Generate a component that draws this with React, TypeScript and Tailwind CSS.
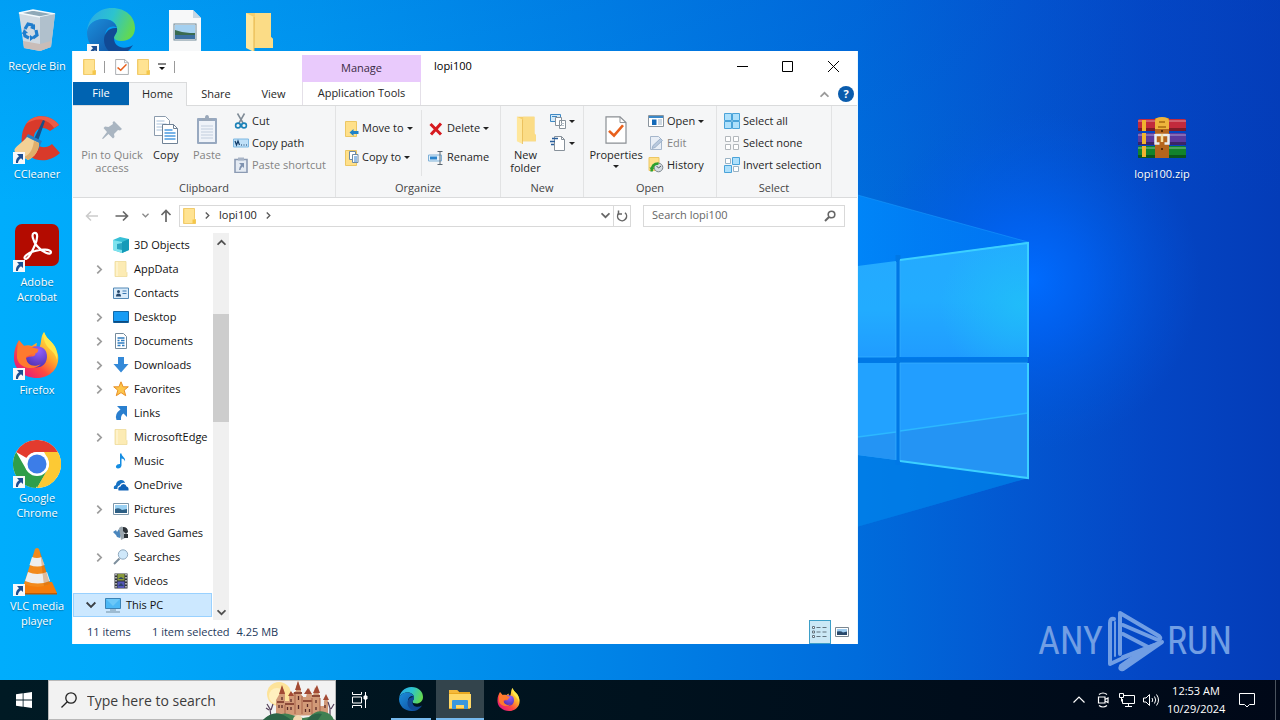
import type { ReactNode } from 'react';

interface IconProps {
  className?: string;
}

interface TreeItem {
  name: string;
  icon: ReactNode;
  expandable?: boolean;
}

/* ---------- desktop background ---------- */

function Wallpaper() {
  return (
    <svg className="absolute inset-0 h-full w-full" viewBox="0 0 1280 680" preserveAspectRatio="none" aria-hidden="true">
      <defs>
        <linearGradient id="sky" x1="0" y1="0" x2="1" y2="0">
          <stop offset="0" stopColor="#00adfc" />
          <stop offset="0.1" stopColor="#00a8fa" />
          <stop offset="0.25" stopColor="#009cf2" />
          <stop offset="0.45" stopColor="#0086e8" />
          <stop offset="0.67" stopColor="#006cdc" />
          <stop offset="0.8" stopColor="#0356d0" />
          <stop offset="0.9" stopColor="#0446c4" />
          <stop offset="1" stopColor="#043cb8" />
        </linearGradient>
        <linearGradient id="topShade" x1="0" y1="0" x2="0" y2="1">
          <stop offset="0" stopColor="#0048c8" stopOpacity="0.14" />
          <stop offset="0.3" stopColor="#0048c8" stopOpacity="0" />
        </linearGradient>
        <radialGradient id="glow" gradientUnits="userSpaceOnUse" cx="1030" cy="280" r="170">
          <stop offset="0" stopColor="#006cff" />
          <stop offset="0.35" stopColor="#0064f8" stopOpacity="0.7" />
          <stop offset="1" stopColor="#0058e0" stopOpacity="0" />
        </radialGradient>
        <linearGradient id="beam" x1="0" y1="0" x2="1" y2="0">
          <stop offset="0" stopColor="#0092fa" />
          <stop offset="0.5" stopColor="#008cff" stopOpacity="0.9" />
          <stop offset="1" stopColor="#007cf4" stopOpacity="0.7" />
        </linearGradient>
        <linearGradient id="pane" x1="0" y1="0" x2="0" y2="1">
          <stop offset="0" stopColor="#24aaff" />
          <stop offset="0.5" stopColor="#22acff" />
          <stop offset="1" stopColor="#209cff" />
        </linearGradient>
        <radialGradient id="paneLight" gradientUnits="userSpaceOnUse" cx="1020" cy="305" r="80">
          <stop offset="0" stopColor="#20c0f8" stopOpacity="0.8" />
          <stop offset="1" stopColor="#20c0f8" stopOpacity="0" />
        </radialGradient>
      </defs>
      <rect width="1280" height="680" fill="url(#sky)" />
      <rect width="1280" height="680" fill="url(#topShade)" />
      <rect x="840" y="90" width="380" height="400" fill="url(#glow)" />
      <path d="M600 124 L1028 242 V478 L600 600Z" fill="url(#beam)" />
      <path d="M600 124 L1028 242" stroke="#1ca0ff" strokeOpacity="0.5" />
      <path d="M850 358H1028V478L850 529Z" fill="#0078dc" opacity="0.6" />
      <path d="M898 255V465M850 360H1028" stroke="#0078e6" strokeWidth="5" />
      <path d="M850 267L896 261V357H850Z" fill="url(#pane)" />
      <path d="M900 260L1028 242V357H900Z" fill="url(#pane)" />
      <path d="M900 260L1028 242V357H900Z" fill="url(#paneLight)" />
      <path d="M850 363H896V460L850 454Z" fill="#22a2ff" />
      <path d="M900 363H1028V478L900 461Z" fill="#229eff" />
      <path d="M850 438L896 432V460L850 454ZM900 431L1028 413V478L900 461Z" fill="#2494f4" />
      <path d="M850 438L896 432M900 431L1028 413" stroke="#2cb8ff" strokeWidth="1.5" />
      <path d="M896 262V357H858M896 363V460M900 461V363H1027M900 357V260" stroke="#38b0ff" fill="none" strokeOpacity="0.7" />
      <path d="M900 260L1028 243V357M1028 363V478L900 461" stroke="#3cd0ff" strokeWidth="2" fill="none" />
    </svg>
  );
}

function Watermark() {
  return (
    <div className="absolute right-12 bottom-2 flex items-center font-['Roboto_Condensed','Liberation_Sans_Narrow','DejaVu_Sans_Condensed',sans-serif] text-[38px] leading-[62px] text-[#719ee4]">
      <span>ANY</span>
      <svg className="mx-0.5" width="60" height="62" viewBox="0 0 60 62" fill="none" stroke="#719ee4" strokeWidth="4" strokeLinejoin="round" strokeLinecap="round" aria-hidden="true">
        <path d="M9 9 Q5 8 5 13 V54 L18 48 L52 34 M15 44 V3 L54 26 Q57 29 53 30 L18 15" />
        <path d="M18 47 L57 32 L18 59 Q14 60 16 56 L43 37 L18 24" />
        <path d="M10 12 V46" strokeWidth="2" />
      </svg>
      <span>RUN</span>
    </div>
  );
}

/* ---------- application logos ---------- */

function EdgeLogo({ className }: IconProps) {
  return (
    <svg className={className} viewBox="0 0 48 48" aria-hidden="true">
      <defs>
        <linearGradient id="edgeTop" x1="0" y1="0.2" x2="1" y2="0.5">
          <stop offset="0" stopColor="#2aa9e8" />
          <stop offset="0.5" stopColor="#2cc3cf" />
          <stop offset="1" stopColor="#64d94e" />
        </linearGradient>
        <linearGradient id="edgeLow" x1="0" y1="0" x2="1" y2="1">
          <stop offset="0" stopColor="#1b8fdc" />
          <stop offset="1" stopColor="#0f4b9c" />
        </linearGradient>
      </defs>
      <path d="M0 24C1 10 11 0 25 0c14 0 23 9 23 20 0 8-6 13-13 13-6 0-8-2-8-4s3-3 3-8c0-6-6-10-13-10C8 11 1 16 0 24z" fill="url(#edgeTop)" />
      <path d="M0 24c1-8 8-13 16-13 8 0 13 4 14 9-3-3-12-2-12 9 0 10 9 19 19 17-3 1-7 2-12 2C11 48 0 38 0 24z" fill="url(#edgeLow)" />
      <path d="M30 20c-8-1-13 5-13 12 0 9 8 16 17 15 5-2 9-5 12-10-8 5-19 3-19-7 0-3 4-5 3-10z" fill="#114a95" />
    </svg>
  );
}

function FirefoxLogo({ className }: IconProps) {
  return (
    <svg className={className} viewBox="0 0 48 48" aria-hidden="true">
      <defs>
        <linearGradient id="foxBody" x1="0.85" y1="0.1" x2="0.15" y2="0.9">
          <stop offset="0" stopColor="#fff04a" />
          <stop offset="0.35" stopColor="#ffa82c" />
          <stop offset="0.65" stopColor="#ff4a3f" />
          <stop offset="1" stopColor="#e41a7c" />
        </linearGradient>
        <radialGradient id="foxGlobe" cx="0.6" cy="0.2" r="0.9">
          <stop offset="0" stopColor="#9460fc" />
          <stop offset="1" stopColor="#4a2dac" />
        </radialGradient>
      </defs>
      <path d="M6 8l5 6c3-1 5-1 8 0 1-1 4-3 5-3 0 0-2 5 2 5 3-4 1-11 5-16 2 6 6 8 9 12 3 3 4 8 5 11 2 13-8 23-21 23C11 46 0 37 1 24 1 18 3 13 6 8z" fill="url(#foxBody)" />
      <path d="M15 18c3-4 10-5 15-2 6 4 5 15-1 18-7 4-16-1-16-8 3-2 6-1 8-2 2-1 2-3-1-4z" fill="url(#foxGlobe)" />
      <path d="M6 9l5 5c4-1 9 2 14 3 1 3-2 5-6 5l-6 3c0 8 8 11 15 7-6 7-22 5-24-6 0-6 0-12 2-17z" fill="#ff7a2e" />
      <path d="M31 0c2 6 6 8 9 12 3 4 5 10 4 16-2-8-6-9-10-14-3-4-4-9-3-14z" fill="#ffe84a" />
    </svg>
  );
}

function ChromeLogo() {
  return (
    <svg className="h-12 w-12" viewBox="0 0 48 48" aria-hidden="true">
      <circle cx="24" cy="24" r="24" fill="#fff" />
      <path d="M3.2 12A24 24 0 0 1 44.8 12H24A12 12 0 0 0 13.6 18z" fill="#e33b2e" />
      <path d="M3.2 12L13.6 30A12 12 0 0 0 24 36L23 48A24 24 0 0 1 3.2 12z" fill="#2f9e4a" />
      <path d="M44.8 12A24 24 0 0 1 24 48L34.4 30A12 12 0 0 0 34.4 18L31 12z" fill="#fcc934" />
      <path d="M13.6 30L24 48L34.4 30z" fill="#2f9e4a" />
      <path d="M24 48L34.4 30A12 12 0 0 0 34.4 18L48 24 40 42z" fill="#fcc934" />
      <circle cx="24" cy="24" r="12" fill="#fff" />
      <circle cx="24" cy="24" r="9.5" fill="#3c7de8" />
    </svg>
  );
}

function RecycleBinIcon() {
  return (
    <svg className="h-12 w-12" viewBox="0 0 48 48" aria-hidden="true">
      <path d="M6 5L20 2l22 4-4 33-11 4-16-3z" fill="#d0dae2" />
      <path d="M6 5l21 4 15-3L20 2z" fill="#8fa9b8" stroke="#f4fafd" strokeWidth="1.5" />
      <path d="M27 9l15-3-4 33-11 4z" fill="#b0c0cc" />
      <path d="M10 33l17 3 11-3-1 6-10 4-16-3z" fill="#c9bdb8" />
      <g fill="none" stroke="#1f7dcd" strokeWidth="3.2">
        <path d="M12 21l3-5 4 1 2 3" />
        <path d="M23 22l1 5-4 3" />
        <path d="M16 30l-4-2-1-4" />
      </g>
      <path d="M22 16v6l-5-2zM17 33v-6l4 3zM9 26l2-5 4 4z" fill="#1f7dcd" />
    </svg>
  );
}

function CCleanerIcon() {
  return (
    <svg className="h-12 w-12" viewBox="0 0 48 48" aria-hidden="true">
      <path d="M46 9C38-2 20-3 13 8c-4 6-5 14-4 21 3 14 23 22 38 8l-8-9c-7 6-17 3-18-5-1-9 8-15 16-8z" fill="#d93a2a" />
      <path d="M46 9C38-2 20-3 13 8c9-6 20-7 28 4z" fill="#ee5c46" />
      <path d="M30 4l2 1-7 20-4-2z" fill="#1b4f86" />
      <path d="M15 18l14 7-4 9-15-8z" fill="#2a7fc4" />
      <path d="M14 21l12 6c0 7-4 14-11 17L2 36c-3-4 6-8 12-15z" fill="#f3d196" />
      <path d="M26 27c0 7-4 14-11 17l-4-3c7-3 9-9 10-16z" fill="#e0ae6a" />
    </svg>
  );
}

function AcrobatIcon() {
  return (
    <svg className="h-12 w-12" viewBox="0 0 48 48" aria-hidden="true">
      <rect x="2" y="0" width="44" height="42" rx="7" fill="#b30b00" />
      <path d="M21 9c5-1 3 7 1 12-3 7-6 13-9 14-4 0 0-6 9-8 7-2 15-2 16 1 0 4-9 0-14-6-4-5-6-12-3-13z" fill="none" stroke="#fff" strokeWidth="2.2" />
    </svg>
  );
}

function VlcIcon() {
  return (
    <svg className="h-12 w-12" viewBox="0 0 48 48" aria-hidden="true">
      <path d="M12 34l-5 11h37l-5-11z" fill="#f57c0b" />
      <path d="M7 45h37v1.500H7z" fill="#c25a00" />
      <path d="M22 1q2-2 4 0l11 35q-12 6-26 0z" fill="#f28a1c" />
      <path d="M19 9q5 2 9.500 0l3 8q-7 3-15 0zM15 24q9 4 19 0l3 9q-12 5-25 0z" fill="#eeeeee" />
      <path d="M27 3l4 35 6-2z" fill="#c45f08" opacity="0.35" />
    </svg>
  );
}

function ImageFileIcon() {
  return (
    <svg className="h-12 w-12" viewBox="0 0 48 48" aria-hidden="true">
      <path d="M8 2h24l8 8v38H8z" fill="#f7f8f9" />
      <path d="M32 2v8h8z" fill="#c7d6e2" />
      <rect x="13" y="16" width="22" height="16" fill="#fff" stroke="#6f8797" />
      <rect x="14" y="17" width="20" height="14" fill="#a4d0f0" />
      <path d="M14 22l7 2 8 1h5v2H14z" fill="#3a6b50" />
      <path d="M14 27h20v4H14z" fill="#3b6fa0" />
    </svg>
  );
}

function BigFolder({ className }: IconProps) {
  return (
    <svg className={className} viewBox="0 0 28 40" aria-hidden="true">
      <path d="M1 1h25v24l2 2v9H8z" fill="#f6cf6c" />
      <path d="M10 1h16v24l2 2v9H9z" fill="#fbdc86" />
      <path d="M1 1l8 4v35l-8-4z" fill="#ffe79c" />
      <path d="M9 5v35" stroke="#e5b64d" />
    </svg>
  );
}

function RarIcon() {
  return (
    <svg className="h-12 w-12" viewBox="0 0 48 48" aria-hidden="true">
      <rect x="0" y="3" width="48" height="12" rx="1.500" fill="#c22a3c" />
      <rect x="0" y="17" width="48" height="12" rx="1.500" fill="#5b3a9e" />
      <rect x="0" y="30" width="48" height="12" rx="1.500" fill="#12832c" />
      <path d="M0 4h48v2H0zM0 18h48v2H0zM0 31h48v2H0z" fill="#fff" opacity="0.25" />
      <path d="M0 12h48v3H0zM0 26h48v3H0zM0 39h48v3H0z" fill="#000" opacity="0.35" />
      <path d="M4 4h4v11H4zM4 17h4v11H4zM4 30h4v11H4z" fill="#f1b42e" />
      <path d="M17 2h14v40H17z" fill="#b5651d" />
      <path d="M17 5q0-4 7-4t7 4v8H17z" fill="#eeb43c" />
      <path d="M21 6h6M20 11h8" stroke="#a86a10" strokeWidth="1.500" />
      <path d="M24 14v2M24 32v2" stroke="#5a2c08" strokeWidth="2" />
      <path d="M17.500 18v9.500h4M30.500 18v9.500h-4M17.500 19h13" fill="none" stroke="#e9edf0" strokeWidth="2.500" />
      <path d="M24 18v8" stroke="#f8e0a0" strokeWidth="2.500" />
    </svg>
  );
}

function ShortcutBadge() {
  return (
    <svg className="absolute bottom-0 left-0 h-3 w-3" viewBox="0 0 12 12" aria-hidden="true">
      <path d="M0 0h12v12H0z" fill="#f6f8fa" />
      <path d="M4 2h6v6L8 6.200C6 7.500 5 9 5 11H3C2.500 8 4 5.500 6 4.200z" fill="#1d4f91" />
    </svg>
  );
}

function DesktopIcon({ name, icon, shortcut }: { name?: string; icon: ReactNode; shortcut?: boolean }) {
  return (
    <a href="#" className="flex h-[108px] w-[74px] flex-col items-center gap-0.5 pt-2 text-center text-[11px] leading-[15px] text-white [text-shadow:0_1px_1px_#0005]">
      <span className="relative flex h-12 w-12 justify-center">
        {icon}
        {shortcut && <ShortcutBadge />}
      </span>
      {name}
    </a>
  );
}

/* ---------- small glyphs ---------- */

function Folder({ className = 'h-4 w-4' }: IconProps) {
  return (
    <svg className={className} viewBox="0 0 16 16" aria-hidden="true">
      <path d="M1.500 0.500h11v10l1 1v4h-12z" fill="#fbd667" stroke="#eec35a" strokeWidth="0.800" />
      <path d="M2.500 1h9.500v14H2.500z" fill="#ffe392" />
      <path d="M10.500 11.500h3v4h-3z" fill="#f5c749" />
    </svg>
  );
}

function PaleFolder() {
  return (
    <svg className="h-4 w-4" viewBox="0 0 16 16" aria-hidden="true">
      <path d="M2 0.500h11v10l1 1v4H2z" fill="#fcebb4" stroke="#eeda9b" strokeWidth="0.800" />
      <path d="M4 1v14" stroke="#fff5d2" strokeWidth="1.500" />
    </svg>
  );
}

function CheckPage({ className = 'h-4 w-4' }: IconProps) {
  return (
    <svg className={className} viewBox="0 0 22 30" preserveAspectRatio="none" aria-hidden="true">
      <path d="M1 1h14l6 6v22H1z" fill="#fff" stroke="#8a8f94" strokeWidth="1.200" />
      <path d="M15 1v6h6" fill="none" stroke="#8a8f94" />
      <path d="M4 16l5 5 9-11" fill="none" stroke="#e8601c" strokeWidth="2.600" />
    </svg>
  );
}

function Caret() {
  return (
    <svg className="h-[3px] w-[6px] shrink-0" viewBox="0 0 6 3" aria-hidden="true">
      <path d="M0 0h6L3 3z" fill="#222" />
    </svg>
  );
}

function Chevron({ className }: IconProps) {
  return (
    <svg className={className} viewBox="0 0 8 8" fill="none" stroke="currentColor" strokeWidth="1.500" aria-hidden="true">
      <path d="M2 0.500L5.500 4L2 7.500" />
    </svg>
  );
}

function Svg16({ children }: { children: ReactNode }) {
  return (
    <svg className="h-4 w-4 shrink-0" viewBox="0 0 16 16" fill="none" aria-hidden="true">
      {children}
    </svg>
  );
}

const cutIcon = (
  <Svg16>
    <path d="M4.500 0.500L10 10M11.500 0.500L6 10" stroke="#7f8b96" strokeWidth="1.500" />
    <circle cx="5" cy="12.500" r="2.400" stroke="#1c82b8" strokeWidth="1.600" />
    <circle cx="11" cy="12.500" r="2.400" stroke="#1c82b8" strokeWidth="1.600" />
  </Svg16>
);

const copyPathIcon = (
  <Svg16>
    <path d="M0.500 4h15v8h-15z" fill="#bfe0f8" stroke="#7db8e2" />
    <path d="M2 6l1.500 4L5 6l1.500 4M8 10h1M10.500 10h1M13 10h1" stroke="#123a66" strokeWidth="1.200" />
  </Svg16>
);

const pasteShortcutIcon = (
  <Svg16>
    <path d="M2 2.500h12v13H2z" fill="#e5ebf3" stroke="#8c9bb3" strokeWidth="1.600" />
    <path d="M5 0.500h6v3H5z" fill="#a8b4c6" />
    <path d="M6 6h5v5L9.500 9.500Q7.500 11 7.500 13H6q0-3 2-5z" fill="#8093b0" />
  </Svg16>
);

const moveToIcon = (
  <Svg16>
    <path d="M2.500 0.500h11v15h-11z" fill="#ffe08a" stroke="#ecc764" />
    <path d="M6.500 11.500l4-3.500v2h5v3h-5v2z" fill="#1f82c8" />
  </Svg16>
);

const copyToIcon = (
  <Svg16>
    <path d="M2.500 0.500h11v15h-11z" fill="#ffe08a" stroke="#ecc764" />
    <path d="M6.500 1.500h6v8h-6z" fill="#fff" stroke="#6d8aa6" />
    <path d="M9.500 4.500h5.500v8H9.500z" fill="#fff" stroke="#6d8aa6" />
    <path d="M11 7h3M11 9h3M11 11h3" stroke="#2f7fd0" />
  </Svg16>
);

const deleteIcon = (
  <Svg16>
    <path d="M2.500 3l10.500 10.500M13 2.500L3 13.500" stroke="#d61a1f" strokeWidth="3" />
  </Svg16>
);

const renameIcon = (
  <Svg16>
    <path d="M0.500 5h13v6H0.500z" fill="#e4f1fb" stroke="#7fb1d8" />
    <path d="M2 6.500h7v3H2z" fill="#2b84cc" />
    <path d="M9.500 1.500h5M12 1.500v13M9.500 14.500h5" stroke="#5b6670" />
  </Svg16>
);

const openIcon = (
  <Svg16>
    <path d="M0.500 2.500h15v11h-15z" fill="#fff" stroke="#8a949d" />
    <path d="M1 3h14v2H1z" fill="#3a88c8" />
    <path d="M4 6.500h4.500v5.500H4z" fill="#1369b8" />
    <path d="M10 7h4M10 9h4M10 11h4" stroke="#9db2c4" />
  </Svg16>
);

const editIcon = (
  <Svg16>
    <path d="M2.500 1.500h8l3 3v10h-11z" fill="#e8eef6" stroke="#a5b6cb" />
    <path d="M4 13.500l1-3 7.500-7 2 2-7.500 7z" fill="#b8c9de" stroke="#93a8c2" strokeWidth="0.800" />
  </Svg16>
);

const historyIcon = (
  <Svg16>
    <path d="M1 0.500h10v13H1z" fill="#ffe08a" stroke="#ecc764" />
    <circle cx="10.500" cy="10.500" r="4.300" fill="#d6dde2" stroke="#7c868e" />
    <path d="M8.500 9l2 2 2.500-2" stroke="#4b565f" />
    <path d="M3.500 14.500C3.500 9 6 6.500 10.500 6.500" stroke="#2ba02f" strokeWidth="2.400" />
    <path d="M1.500 10.500h5l-2.500 4z" fill="#2ba02f" />
  </Svg16>
);

const selectAllIcon = (
  <Svg16>
    <path d="M0.500 0.500h7v7h-7zM8.500 0.500h7v7h-7zM0.500 8.500h7v7h-7zM8.500 8.500h7v7h-7z" fill="#aee0fb" stroke="#4aa3d9" />
  </Svg16>
);

const selectNoneIcon = (
  <Svg16>
    <path d="M1.500 1.500h5v5h-5zM9.500 1.500h5v5h-5zM1.500 9.500h5v5h-5zM9.500 9.500h5v5h-5z" fill="#fff" stroke="#b3b8bc" />
  </Svg16>
);

const invertIcon = (
  <Svg16>
    <path d="M1.500 1.500h5v5h-5zM9.500 9.500h5v5h-5z" fill="#fff" stroke="#9ab3c4" />
    <path d="M8.500 0.500h7v7h-7zM0.500 8.500h7v7h-7z" fill="#aee0fb" stroke="#4aa3d9" />
  </Svg16>
);

const newItemIcon = (
  <Svg16>
    <path d="M0.500 1.500h10v7h-10z" fill="#d4eaf9" stroke="#3f89c4" />
    <path d="M2 3.500h5" stroke="#3f89c4" />
    <path d="M5.500 4.500h6v8h-6zM9.500 7.500h6v8h-6z" fill="#fff" stroke="#87919a" />
    <path d="M11 10.500h3M11 12.500h3" stroke="#b5bfc8" />
  </Svg16>
);

const easyAccessIcon = (
  <Svg16>
    <path d="M4.500 1.500h7l3 3v11h-10z" fill="#fff" stroke="#87919a" />
    <path d="M11.500 1.500v3h3" stroke="#87919a" />
    <path d="M2 3.500h6M0 6.500h5M1 9.500h3" stroke="#2a5f9c" strokeWidth="1.300" />
  </Svg16>
);

const pinIcon = (
  <svg className="h-6 w-6" viewBox="0 0 24 24" aria-hidden="true">
    <path d="M14 3l8 8-2 1.500-2-0.500-4 4 0.500 3-1.500 1.500-4.500-4.500L3 21l-1-0.500L7 14 3.500 10l1.500-1.500 3.500 0.500L13 6l-0.500-1.500z" fill="#a9b5c1" />
  </svg>
);

const copyIcon = (
  <svg className="h-[30px] w-[26px]" viewBox="0 0 26 30" fill="none" aria-hidden="true">
    <path d="M1.500 1.500h11l4 4v15h-15z" fill="#fff" stroke="#8b9bad" />
    <path d="M3.500 6h8M3.500 9h10M3.500 12h10M3.500 15h10" stroke="#a9c2dc" />
    <path d="M9.500 9.500h11l4 4v15h-15z" fill="#fff" stroke="#6f8296" />
    <path d="M20.500 9.500v4h4" stroke="#6f8296" />
    <path d="M11.500 15h8M11.500 18h11M11.500 21h11M11.500 24h11" stroke="#4b9ae0" strokeWidth="1.300" />
  </svg>
);

const pasteIcon = (
  <svg className="h-[32px] w-[22px]" viewBox="0 0 22 32" fill="none" aria-hidden="true">
    <rect x="1" y="4" width="20" height="26" rx="1" fill="#98a9c0" />
    <path d="M3 7h16v21H3z" fill="#eff3f9" />
    <path d="M5 12h12M5 15h12M5 18h12M5 21h12M5 24h12" stroke="#c1cddd" />
    <path d="M6 7V4h3q0-3 2-3t2 3h3v3z" fill="#9aa8ba" />
  </svg>
);

/* ---------- navigation tree ---------- */

const treeItems: TreeItem[] = [
  {
    name: '3D Objects',
    icon: (
      <Svg16>
        <path d="M0 3l7-3 9 2v11l-7 3-9-3z" fill="#37bfd6" />
        <path d="M0 3l9 2v11l-9-3z" fill="#7ee3ee" />
        <path d="M9 5l7-3v11l-7 3z" fill="#149ab8" />
        <path d="M4 7l5-1v7l-5-1z" fill="#2aa6c2" />
      </Svg16>
    ),
  },
  { name: 'AppData', icon: <PaleFolder />, expandable: true },
  {
    name: 'Contacts',
    icon: (
      <Svg16>
        <path d="M0.500 3h15v10.500h-15z" fill="#d9ebfa" stroke="#5288b5" />
        <circle cx="5.500" cy="6.500" r="1.500" fill="#24476b" />
        <path d="M3 11.500q0-3 2.500-3t2.500 3z" fill="#24476b" />
        <path d="M9.500 6h4M9.500 8.500h4" stroke="#3a78b2" />
      </Svg16>
    ),
  },
  {
    name: 'Desktop',
    icon: (
      <Svg16>
        <path d="M0.500 2.500h15v11h-15z" fill="#189cf4" stroke="#1369a8" />
        <path d="M1 12h14v1.500H1z" fill="#0d4a80" />
      </Svg16>
    ),
    expandable: true,
  },
  {
    name: 'Documents',
    icon: (
      <Svg16>
        <path d="M2.500 0.500h8l3 3v12h-11z" fill="#fff" stroke="#748a9b" />
        <path d="M4.500 5h7M4.500 7.500h2M8 7.500h3.500M4.500 10h7M4.500 12.500h3M9 12.500h2.500" stroke="#2f7cc0" strokeWidth="1.300" />
      </Svg16>
    ),
    expandable: true,
  },
  {
    name: 'Downloads',
    icon: (
      <Svg16>
        <path d="M5 0h6v7h4.500L8 15.500 0.500 7H5z" fill="#3489d8" />
      </Svg16>
    ),
    expandable: true,
  },
  {
    name: 'Favorites',
    icon: (
      <Svg16>
        <path d="M8 0.800l2.100 5h5.200l-4.100 3.400 1.500 5.500L8 11.600l-4.700 3.100 1.500-5.500L0.700 5.800h5.200z" fill="#fdc64a" stroke="#e88f28" />
      </Svg16>
    ),
    expandable: true,
  },
  {
    name: 'Links',
    icon: (
      <Svg16>
        <path d="M4 1h10v11l-3.500-3.500Q7.500 10 8 15H3.500Q1 9 7.500 4.500z" fill="#2a7fcf" />
      </Svg16>
    ),
  },
  { name: 'MicrosoftEdge', icon: <PaleFolder />, expandable: true },
  {
    name: 'Music',
    icon: (
      <Svg16>
        <path d="M7 0.500h1.500c0 3 4.500 4 3.500 8-0.500-2-2-3-3.500-3v7q-0.500 3-3.500 3Q2.500 15 3 13q1-2.200 4-2z" fill="#158de2" />
      </Svg16>
    ),
  },
  {
    name: 'OneDrive',
    icon: (
      <Svg16>
        <path d="M1 12Q0 9 3 8q0-4 4.500-5Q11 2.500 12 6Q8 5 6.500 8.500 4 9 4.500 12z" fill="#1672c4" />
        <path d="M5.500 13.500Q4.500 10 7.500 9.500 8 7 10.500 7t3 2.500Q16 10 15.500 13.500z" fill="#0f62b8" />
      </Svg16>
    ),
  },
  {
    name: 'Pictures',
    icon: (
      <Svg16>
        <path d="M0.500 2.500h15v11h-15z" fill="#fff" stroke="#7d97aa" />
        <path d="M2 4h12v8H2z" fill="#9ad0f2" />
        <path d="M2 8q4-2 7 1l5-1v4H2z" fill="#2d5f84" />
      </Svg16>
    ),
    expandable: true,
  },
  {
    name: 'Saved Games',
    icon: (
      <Svg16>
        <path d="M0 7l3-2 1 2 2-3 3 4-2 5-3-1-1-2z" fill="#4a86bd" />
        <path d="M6 3q3-3 5 0l1 10-4 2z" fill="#9aa5ad" />
        <path d="M10 2q5 0 5 5l-2 2-3-3zM11 9h4v4h-4z" fill="#2c3237" />
      </Svg16>
    ),
  },
  {
    name: 'Searches',
    icon: (
      <Svg16>
        <circle cx="10" cy="5.500" r="4.700" fill="#cfe8fa" stroke="#91aabf" />
        <path d="M6.500 9.500L1 15" stroke="#7d8e9c" strokeWidth="2" />
      </Svg16>
    ),
    expandable: true,
  },
  {
    name: 'Videos',
    icon: (
      <Svg16>
        <path d="M1.500 0.500h13v15h-13z" fill="#2e3238" />
        <path d="M4.500 1h7v6.500h-7z" fill="#8a9a3c" />
        <path d="M4.500 8.500h7V15h-7z" fill="#5457b8" />
        <path d="M5 6l3-2 3 2zM5 13l3-3 3 3z" fill="#2b4368" />
        <path d="M3 1v15M13 1v15" stroke="#fff" strokeWidth="1.200" strokeDasharray="1.500 1.500" />
      </Svg16>
    ),
  },
];

function NavigationPane() {
  return (
    <nav aria-label="Folders" className="w-[140px] overflow-hidden">
      <ul>
        {treeItems.map((item) => (
          <li key={item.name} className="flex h-6 items-center pl-[18px]">
            <span className="mr-1.5 flex w-4 justify-center text-[#9c9c9c]">
              {item.expandable && <Chevron className="h-[9px] w-[9px]" />}
            </span>
            {item.icon}
            <a href="#" className="ml-[5px] whitespace-nowrap">{item.name}</a>
          </li>
        ))}
        <li className="mr-px flex h-6 items-center border border-[#99d1ff] bg-[#cce8ff] pl-[9px]">
          <span className="mr-1.5 flex w-4 justify-center text-[#3b4045]">
            <Chevron className="h-[10px] w-[10px] rotate-90" />
          </span>
          <Svg16>
            <path d="M0.500 1.500h15v10h-15z" fill="#4db8f5" stroke="#3a82b5" />
            <path d="M1 2h14L8 9z" fill="#8ad6fb" opacity="0.500" />
            <path d="M5 13h6M1 15h14" stroke="#6f8fa5" />
          </Svg16>
          <a href="#" className="ml-[5px]">This PC</a>
        </li>
      </ul>
    </nav>
  );
}

/* ---------- ribbon ---------- */

function RibbonGroup({ title, children }: { title: string; children: ReactNode }) {
  return (
    <div className="flex flex-col border-r border-[#e2e3e4] pt-1">
      <div className="flex h-[66px]">{children}</div>
      <div className="pt-[3px] text-center leading-[18px] text-[#444]">{title}</div>
    </div>
  );
}

function LargeButton({ label, icon, className, caret }: { label: string; icon: ReactNode; className: string; caret?: boolean }) {
  return (
    <button type="button" className={`flex flex-col items-center pt-1 leading-[13px] ${className}`}>
      <span className="mb-0.5 flex h-8 items-center justify-center">{icon}</span>
      {label}
      {caret && <span className="mt-1"><Caret /></span>}
    </button>
  );
}

function SmallButton({ label, icon, caret, disabled }: { label?: string; icon: ReactNode; caret?: boolean; disabled?: boolean }) {
  return (
    <button type="button" disabled={disabled} className="flex flex-1 items-center gap-[3px] whitespace-nowrap disabled:text-[#838383]">
      {icon}
      {label}
      {caret && <Caret />}
    </button>
  );
}

function Ribbon() {
  return (
    <div className="flex border-y border-[#dadbdc] bg-[#f5f6f7] text-[#262626]">
      <RibbonGroup title="Clipboard">
        <LargeButton label="Pin to Quick access" icon={pinIcon} className="w-[78px] px-1 text-[#838383]" />
        <LargeButton label="Copy" icon={copyIcon} className="w-[30px]" />
        <LargeButton label="Paste" icon={pasteIcon} className="w-[52px] text-[#838383]" />
        <div className="flex w-[102px] flex-col">
          <SmallButton label="Cut" icon={cutIcon} />
          <SmallButton label="Copy path" icon={copyPathIcon} />
          <SmallButton label="Paste shortcut" icon={pasteShortcutIcon} disabled />
        </div>
      </RibbonGroup>
      <RibbonGroup title="Organize">
        <div className="flex w-[86px] flex-col border-r border-[#e2e3e4] pt-1 pb-1 pl-[7px]">
          <SmallButton label="Move to" icon={moveToIcon} caret />
          <SmallButton label="Copy to" icon={copyToIcon} caret />
        </div>
        <div className="flex w-[78px] flex-col pt-1 pb-1 pl-1.5">
          <SmallButton label="Delete" icon={deleteIcon} caret />
          <SmallButton label="Rename" icon={renameIcon} />
        </div>
      </RibbonGroup>
      <RibbonGroup title="New">
        <LargeButton label="New folder" icon={<BigFolder className="h-7 w-5" />} className="w-[49px] px-1.5" />
        <div className="flex w-[33px] flex-col">
          <SmallButton icon={newItemIcon} caret />
          <SmallButton icon={easyAccessIcon} caret />
          <span className="flex-1" />
        </div>
      </RibbonGroup>
      <RibbonGroup title="Open">
        <LargeButton label="Properties" icon={<CheckPage className="h-7 w-[22px]" />} className="w-16" caret />
        <div className="flex w-[68px] flex-col">
          <SmallButton label="Open" icon={openIcon} caret />
          <SmallButton label="Edit" icon={editIcon} disabled />
          <SmallButton label="History" icon={historyIcon} />
        </div>
      </RibbonGroup>
      <RibbonGroup title="Select">
        <div className="flex w-[114px] flex-col pl-[7px]">
          <SmallButton label="Select all" icon={selectAllIcon} />
          <SmallButton label="Select none" icon={selectNoneIcon} />
          <SmallButton label="Invert selection" icon={invertIcon} />
        </div>
      </RibbonGroup>
    </div>
  );
}

/* ---------- explorer window ---------- */

function TitleBar() {
  return (
    <header className="flex h-[31px] items-stretch">
      <div className="flex w-[229px] items-center pl-[9px]">
        <Folder />
        <span className="mr-2.5 ml-1.5 h-3 w-px bg-[#9a9a9a]" />
        <CheckPage className="h-4 w-[14px]" />
        <span className="w-[7px]" />
        <Folder />
        <svg className="ml-1.5 h-2 w-2" viewBox="0 0 8 8" aria-hidden="true">
          <path d="M0 1h8" stroke="#111" />
          <path d="M1 4h6L4 7z" fill="#111" />
        </svg>
        <span className="ml-2 h-3 w-px bg-[#9a9a9a]" />
      </div>
      <div className="mt-1 flex w-[119px] items-center justify-center bg-[#e9cafc] text-[#3a2a44]">Manage</div>
      <h1 className="flex flex-1 items-center pl-[13px] text-black">lopi100</h1>
      <button type="button" aria-label="Minimize" className="flex w-[45px] items-center justify-center">
        <svg className="h-[11px] w-[11px]" viewBox="0 0 11 11" aria-hidden="true"><path d="M0 5.500h11" stroke="#000" /></svg>
      </button>
      <button type="button" aria-label="Maximize" className="flex w-[45px] items-center justify-center">
        <svg className="h-[11px] w-[11px]" viewBox="0 0 11 11" aria-hidden="true"><path d="M0.500 0.500h10v10h-10z" stroke="#000" fill="none" /></svg>
      </button>
      <button type="button" aria-label="Close" className="flex w-[47px] items-center justify-center">
        <svg className="h-[11px] w-[11px]" viewBox="0 0 11 11" aria-hidden="true"><path d="M0 0l11 11M11 0L0 11" stroke="#000" /></svg>
      </button>
    </header>
  );
}

function TabRow() {
  return (
    <div className="relative z-10 -mb-px flex h-6 text-[#262626]">
      <button type="button" className="w-14 border-b border-[#dadbdc] bg-[#0063b1] text-white">File</button>
      <button type="button" className="w-[58px] border-t border-r border-[#dadbdc] bg-[#f5f6f7]">Home</button>
      <button type="button" className="w-[58px]">Share</button>
      <button type="button" className="w-[57px]">View</button>
      <button type="button" className="mb-px w-[119px] border-x border-[#e4e0e8] whitespace-nowrap">Application Tools</button>
      <span className="flex-1" />
      <button type="button" aria-label="Collapse ribbon" className="flex w-5 items-center justify-center text-[#9a9a9a]">
        <Chevron className="h-[9px] w-[9px] -rotate-90" />
      </button>
      <button type="button" aria-label="Help" className="my-1 mr-[3px] ml-1 h-4 w-4 rounded-full bg-[#0a5cad] text-[11px] leading-4 font-bold text-white">?</button>
    </div>
  );
}

function AddressRow() {
  return (
    <div className="flex h-[35px] items-center pr-3 pl-[11px] text-[#1f1f1f]">
      <button type="button" aria-label="Back" className="mr-3.5">
        <svg className="h-4 w-4" viewBox="0 0 16 16" fill="none" stroke="#cbcbcb" strokeWidth="1.500"><path d="M14 8H2.500M7 3.500L2.500 8L7 12.500" /></svg>
      </button>
      <button type="button" aria-label="Forward" className="mr-2">
        <svg className="h-4 w-4" viewBox="0 0 16 16" fill="none" stroke="#666" strokeWidth="1.700"><path d="M1.500 8H13.500M9 3.500L13.500 8L9 12.500" /></svg>
      </button>
      <button type="button" aria-label="Recent locations" className="mr-1.5 flex w-3.5 justify-center text-[#8a8a8a]">
        <Chevron className="h-[7px] w-[7px] rotate-90" />
      </button>
      <button type="button" aria-label="Up" className="mr-[5px]">
        <svg className="h-4 w-4" viewBox="0 0 16 16" fill="none" stroke="#666" strokeWidth="1.700"><path d="M8 14V2.500M3.500 7L8 2.500L12.500 7" /></svg>
      </button>
      <div className="flex h-[22px] min-w-0 flex-1 items-center border border-[#d9d9d9] pl-0.5">
        <Folder />
        <Chevron className="mx-1.5 h-[7px] w-[7px] text-[#5a5a5a]" />
        <a href="#" className="ml-0.5">lopi100</a>
        <Chevron className="ml-2 h-[7px] w-[7px] text-[#5a5a5a]" />
        <span className="flex-1" />
        <button type="button" aria-label="Previous locations" className="flex w-4 justify-center text-[#666]">
          <Chevron className="h-[9px] w-[9px] rotate-90" />
        </button>
        <button type="button" aria-label="Refresh" className="flex h-5 w-[17px] items-center justify-center border-l border-[#d9d9d9]">
          <svg className="h-3 w-3" viewBox="0 0 12 12" fill="none" stroke="#666" strokeWidth="1.500">
            <path d="M2.500 3.500A4.500 4.500 0 1 0 9 2.800" />
            <path d="M2.500 0.500v3.500h3.500" />
          </svg>
        </button>
      </div>
      <label className="ml-3 flex h-[22px] w-[202px] items-center border border-[#d9d9d9] pr-2 pl-2">
        <input type="search" aria-label="Search lopi100" placeholder="Search lopi100" className="min-w-0 flex-1 outline-none placeholder:text-[#666]" />
        <svg className="h-3 w-3" viewBox="0 0 12 12" fill="none" stroke="#666">
          <circle cx="7.500" cy="4.500" r="3.300" strokeWidth="1.600" />
          <path d="M5 7L1 11" strokeWidth="2" />
        </svg>
      </label>
    </div>
  );
}

function ScrollBar() {
  return (
    <div className="flex w-4 flex-col bg-[#f0f0f0] text-[#505050]">
      <button type="button" aria-label="Scroll up" className="flex h-[18px] items-center justify-center">
        <Chevron className="h-[9px] w-[9px] -rotate-90" />
      </button>
      <span className="flex-[63]" />
      <span className="flex-[108] bg-[#cdcdcd]" />
      <span className="flex-[181]" />
      <button type="button" aria-label="Scroll down" className="flex h-4 items-center justify-center">
        <Chevron className="h-[9px] w-[9px] rotate-90" />
      </button>
    </div>
  );
}

function StatusBar() {
  return (
    <footer className="flex h-6 items-center pr-[7px] pl-3.5 text-[#1e395b]">
      <span className="w-[65px]">11 items</span>
      <span>1 item selected</span>
      <span className="ml-[7px]">4.25 MB</span>
      <span className="flex-1" />
      <button type="button" aria-label="Details view" className="flex h-6 w-[22px] items-center justify-center border border-[#3d9fc8] bg-[#cbe8f6]">
        <Svg16>
          <path d="M0.500 2.500h2v2h-2zM0.500 7h2v2h-2zM0.500 11.500h2v2h-2z" fill="#fff" stroke="#62737f" />
          <path d="M4.500 3.500h4M10.500 3.500h4M4.500 8h4M10.500 8h4M4.500 12.500h4M10.500 12.500h4" stroke="#62737f" />
        </Svg16>
      </button>
      <button type="button" aria-label="Large icons view" className="ml-[3px]">
        <Svg16>
          <path d="M1.500 3.500h13v9h-13z" fill="#fff" stroke="#7b8791" />
          <path d="M3 5h10v6H3z" fill="#9fcdf0" />
          <path d="M3 7.500q4-1 6 1l4-1V11H3z" fill="#29496b" />
        </Svg16>
      </button>
    </footer>
  );
}

function ExplorerWindow() {
  return (
    <section aria-label="lopi100" className="absolute top-[51px] right-[422px] bottom-9 left-[72px] flex min-w-[760px] flex-col border-x border-[#e8f8ff] bg-white text-[11px]">
      <TitleBar />
      <TabRow />
      <Ribbon />
      <AddressRow />
      <div className="flex min-h-0 flex-1 text-[#111]">
        <NavigationPane />
        <ScrollBar />
        <main className="flex-1" />
      </div>
      <StatusBar />
    </section>
  );
}

/* ---------- taskbar ---------- */

function CastleArt() {
  return (
    <svg className="h-10 w-[72px]" viewBox="0 0 72 40" aria-hidden="true">
      <circle cx="16" cy="14" r="12" fill="#fde39a" />
      <circle cx="14" cy="16" r="8" fill="#fff0bf" />
      <path d="M13 36V20l4-7 2-7 3 7v8h4v-7l4-1 3-2V8l2-7 3 9v4l2 3h3l1-4 2-5 2 5 2 3 2-9 3 5 2 4v10h4v-5l2-4 2 4v14z" fill="#d29a78" />
      <path d="M16 14l3-9 3 9zM25 16l3-5 3 5zM32 10l3-9 3 9zM41 14l4-6 4 6zM50 13l4-8 3 8zM60 20l3-6 3 6z" fill="#a34a34" />
      <path d="M14 21h7v2h-7zM31 12h8v2h-8zM49 15h8v2h-8zM22 23h9v2h-9zM40 20h9v2h-9z" fill="#8d4a38" />
      <path d="M22 25v9M32 14v20M39 16v18M49 18v16M57 18v16" stroke="#a86248" />
      <path d="M16 25v3M19 25v3M19 17v3M28 19v3M35.500 16v4M44.500 24v3M53 20v3M53 27v3M62 25v3M35.500 25v4M28 27v3M24.500 27v3M46.500 29v3M42.500 29v3" stroke="#5a2a26" strokeWidth="1.300" />
      <path d="M4 24l3 5 1 8M10 24l-2 6M65 22l2 6v8M71 24l-3 5M3 28l3 2" stroke="#54405a" strokeWidth="1.200" fill="none" />
      <path d="M0 40q8-8 15-5 7-3 14 0l11 3 6-1q8-8 16-5 7 2 9 8z" fill="#3f8052" />
      <path d="M0 40q9-9 18-6 7 3 10 6zM44 40q6-8 15-6l-4 6z" fill="#2c6447" />
      <path d="M30 40q0-4 5-5 5 1 4 5z" fill="#f0d8b0" />
    </svg>
  );
}

function Taskbar() {
  return (
    <footer className="flex h-10 shrink-0 bg-linear-to-r from-[#001a24] via-[#00121e] to-[#000818] text-white">
      <button type="button" aria-label="Start" className="flex w-12 items-center justify-center">
        <svg className="h-4 w-4" viewBox="0 0 16 16" fill="#fff" aria-hidden="true">
          <path d="M0 2.200L6.700 1.300V7.600H0zM7.500 1.200L16 0V7.600H7.500zM0 8.400H6.700V14.700L0 13.800zM7.500 8.400H16V16L7.500 14.800z" />
        </svg>
      </button>
      <label className="flex w-72 items-center border border-[#b8b8b8] bg-[#f2f2f2] pl-3">
        <svg className="h-4 w-4 shrink-0" viewBox="0 0 16 16" fill="none" stroke="#222" strokeWidth="1.300" aria-hidden="true">
          <circle cx="10" cy="6" r="5.200" />
          <path d="M6.300 9.700L0.500 15.500" />
        </svg>
        <input type="text" aria-label="Type here to search" placeholder="Type here to search" className="ml-2.5 w-[176px] text-[14px] text-black outline-none placeholder:text-[#3c3c3c]" />
        <CastleArt />
      </label>
      <button type="button" aria-label="Task View" className="mr-[3px] flex w-12 items-center justify-center">
        <svg className="h-4 w-4" viewBox="0 0 16 16" fill="none" stroke="#fff" aria-hidden="true">
          <path d="M0.500 0v2.500h9V0M0.500 16v-2.500h9V16M0.500 5h9v6h-9zM13.500 0v16" />
          <path d="M12 4h3v3h-3z" fill="#fff" />
        </svg>
      </button>
      <button type="button" aria-label="Microsoft Edge" className="flex w-12 flex-col items-center">
        <span className="flex flex-1 items-center"><EdgeLogo className="h-6 w-6" /></span>
        <span className="h-0.5 w-10 bg-[#76b9ed]" />
      </button>
      <button type="button" aria-label="File Explorer" className="mx-px flex w-12 flex-col items-center bg-[#33444c]">
        <span className="flex flex-1 items-center">
          <svg className="h-6 w-6" viewBox="0 0 24 24" aria-hidden="true">
            <path d="M1 3h8l2 2h11v17H1z" fill="#e9a820" />
            <path d="M1 7h22v14H1z" fill="#ffd866" />
            <path d="M4 22v-8q0-1 1-1h14q1 0 1 1v8h-4v-4H8v4z" fill="#3a97dc" />
            <path d="M1 3h8l2 2v1H1z" fill="#f5b93a" />
          </svg>
        </span>
        <span className="h-0.5 w-12 bg-[#76b9ed]" />
      </button>
      <button type="button" aria-label="Firefox" className="flex w-12 items-center justify-center">
        <FirefoxLogo className="h-6 w-6" />
      </button>
      <span className="flex-1" />
      <div className="flex items-center gap-2">
        <button type="button" aria-label="Show hidden icons">
          <Svg16><path d="M2.500 10.500L8 5l5.500 5.500" stroke="#fff" strokeWidth="1.200" /></Svg16>
        </button>
        <button type="button" aria-label="Meet Now">
          <Svg16>
            <path d="M3.500 5h6.500v6H3.500zM10 7.500l3-1.500v4.500l-3-1.500M4 2.500Q8-0.500 12 2.500M4 13.500Q8 16.500 12 13.500" stroke="#fff" strokeWidth="1.200" />
          </Svg16>
        </button>
        <button type="button" aria-label="Network">
          <Svg16>
            <path d="M4.500 3.500h11v8H3.500V7M9.500 11.500v3M6 14.500h7M0.500 1.500h4v4h-4zM2.500 5.500v4" stroke="#fff" />
          </Svg16>
        </button>
        <button type="button" aria-label="Volume">
          <Svg16>
            <path d="M0.500 6h2.500l3.500-3.500v11L3 10H0.500zM9 6q1.500 2 0 4M11.500 4.500q2.500 3.500 0 7M13.500 2.500q4 5.500 0 11" stroke="#fff" />
          </Svg16>
        </button>
      </div>
      <time className="ml-2 w-[58px] self-center text-center text-[11px] leading-[18px] whitespace-nowrap">
        12:53 AM
        <br />
        10/29/2024
      </time>
      <button type="button" aria-label="Notifications" className="ml-3.5 flex items-center">
        <svg className="h-4 w-4" viewBox="0 0 16 16" fill="none" stroke="#fff" aria-hidden="true">
          <path d="M0.500 1.500h15v11H10.500L8 15l-2.500-2.500H0.500z" />
        </svg>
      </button>
      <span className="ml-5 mr-1 w-px bg-[#4a535e]" />
    </footer>
  );
}

export default function App() {
  return (
    <div className="flex min-h-screen flex-col font-['Open_Sans','Noto_Sans',sans-serif]">
      <div className="relative flex-1 overflow-hidden">
        <Wallpaper />
        <div className="relative flex">
          <div className="flex flex-col">
            <DesktopIcon name="Recycle Bin" icon={<RecycleBinIcon />} />
            <DesktopIcon name="CCleaner" icon={<CCleanerIcon />} shortcut />
            <DesktopIcon name="Adobe Acrobat" icon={<AcrobatIcon />} shortcut />
            <DesktopIcon name="Firefox" icon={<FirefoxLogo className="h-12 w-12" />} shortcut />
            <DesktopIcon name="Google Chrome" icon={<ChromeLogo />} shortcut />
            <DesktopIcon name="VLC media player" icon={<VlcIcon />} shortcut />
          </div>
          <DesktopIcon icon={<EdgeLogo className="h-12 w-12" />} shortcut />
          <DesktopIcon icon={<ImageFileIcon />} />
          <DesktopIcon icon={<BigFolder className="mt-1 h-10 w-7" />} />
        </div>
        <div className="absolute top-[108px] right-[81px]">
          <DesktopIcon name="lopi100.zip" icon={<RarIcon />} />
        </div>
        <Watermark />
        <ExplorerWindow />
      </div>
      <Taskbar />
    </div>
  );
}
